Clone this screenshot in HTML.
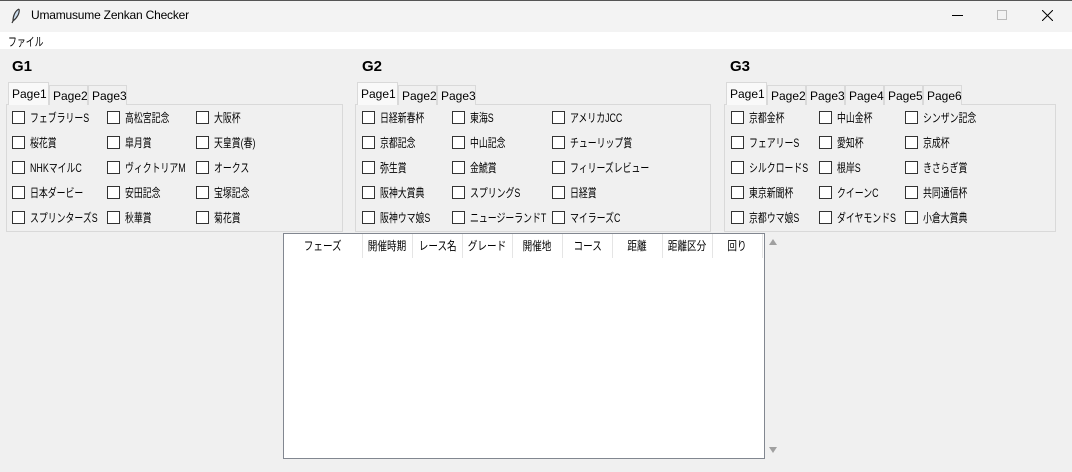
<!DOCTYPE html>
<html><head><meta charset="utf-8"><style>
*{margin:0;padding:0;box-sizing:border-box}
body{width:1072px;height:472px;background:#f0f0f0;font-family:"Liberation Sans","Noto Sans CJK JP",sans-serif;font-size:12px;color:#000;position:relative;overflow:hidden}
.a{position:absolute;white-space:nowrap}
.sq{transform:scaleX(0.74);transform-origin:left center}
.tb{left:0;top:0;width:1072px;height:32px;background:#f3f3f3;border-top:1px solid #555}
.menu{left:0;top:32px;width:1072px;height:17px;background:#fff}
.h{font-weight:bold;font-size:15px}
.tab{height:20px;border:1px solid #d9d9d9;border-bottom:none;background:#f0f0f0;padding:3px 3px 0;font-size:12px}
.tab.s{background:#f9f9f9;height:23px;padding-top:4px;z-index:2}
.frame{border:1px solid #d9d9d9}
.cb{width:13px;height:13px;border:1px solid #333;background:#fff}
.th{top:234px;height:24px;text-align:center;line-height:24px;border-right:1px solid #e5e5e5;overflow:hidden;z-index:3}
.th span{display:inline-block;transform:scaleX(0.8)}
</style></head><body>
<div class="a tb"></div>
<svg class="a" style="left:10px;top:8px" width="12" height="16" viewBox="0 0 12 16"><path d="M9 1C5 3 3 8 3 13L2 15M9 1C10 5 7 10 3 13" stroke="#333" fill="#cde" stroke-width="1.2"/></svg>
<div class="a" style="left:31px;top:8px;font-size:12px;letter-spacing:-0.2px">Umamusume Zenkan Checker</div>
<div class="a" style="left:952px;top:15px;width:11px;height:1px;background:#000"></div>
<div class="a" style="left:997px;top:10px;width:10px;height:10px;border:1px solid #bbb"></div>
<svg class="a" style="left:1042px;top:10px" width="11" height="11"><path d="M0 0L11 11M11 0L0 11" stroke="#000"/></svg>
<div class="a menu"></div>
<div class="a sq" style="left:8px;top:33px">ファイル</div>

<div class="a" style="left:283px;top:233px;width:482px;height:226px;border:1px solid #828790;background:#fff"></div>
<div class="a" style="left:766px;top:234px;width:15px;height:225px;background:#f0f0f0"></div>
<div class="a" style="left:769px;top:239px;width:0;height:0;border-left:4px solid transparent;border-right:4px solid transparent;border-bottom:6px solid #a0a0a0"></div>
<div class="a" style="left:769px;top:447px;width:0;height:0;border-left:4px solid transparent;border-right:4px solid transparent;border-top:6px solid #a0a0a0"></div>

<div id="c"></div>
<script>
var h='';
function g(lbl,lx,tx,tabs,fw,cols,rows){
 h+='<div class="a h" style="left:'+lx+'px;top:58px">'+lbl+'</div>';
 h+='<div class="a frame" style="left:'+(tx-2)+'px;top:104px;width:'+fw+'px;height:128px"></div>';
 var x=tx;
 for(var i=0;i<tabs;i++){var w=i==0?41:39;h+='<div class="a tab'+(i==0?' s':'')+'" style="left:'+x+'px;top:'+(i==0?82:85)+'px;width:'+w+'px">Page'+(i+1)+'</div>';x+=w;}
 for(var c=0;c<3;c++)for(var r=0;r<5;r++){var y=111+r*25;
  h+='<div class="a cb" style="left:'+cols[c]+'px;top:'+y+'px"></div><div class="a sq" style="left:'+(cols[c]+18)+'px;top:'+(y-2)+'px">'+rows[c][r]+'</div>';}
}
g('G1',12,8,3,337,[12,107,196],[['フェブラリーS','桜花賞','NHKマイルC','日本ダービー','スプリンターズS'],['高松宮記念','皐月賞','ヴィクトリアM','安田記念','秋華賞'],['大阪杯','天皇賞(春)','オークス','宝塚記念','菊花賞']]);
g('G2',362,357,3,356,[362,452,552],[['日経新春杯','京都記念','弥生賞','阪神大賞典','阪神ウマ娘S'],['東海S','中山記念','金鯱賞','スプリングS','ニュージーランドT'],['アメリカJCC','チューリップ賞','フィリーズレビュー','日経賞','マイラーズC']]);
g('G3',730,726,6,332,[731,819,905],[['京都金杯','フェアリーS','シルクロードS','東京新聞杯','京都ウマ娘S'],['中山金杯','愛知杯','根岸S','クイーンC','ダイヤモンドS'],['シンザン記念','京成杯','きさらぎ賞','共同通信杯','小倉大賞典']]);
var hd=['フェーズ','開催時期','レース名','グレード','開催地','コース','距離','距離区分','回り'];
var x=284;
for(var i=0;i<9;i++){var w=i==0?79:50;h+='<div class="a th" style="left:'+x+'px;width:'+w+'px"><span>'+hd[i]+'</span></div>';x+=w;}
document.getElementById('c').innerHTML=h;
</script>
</body></html>
